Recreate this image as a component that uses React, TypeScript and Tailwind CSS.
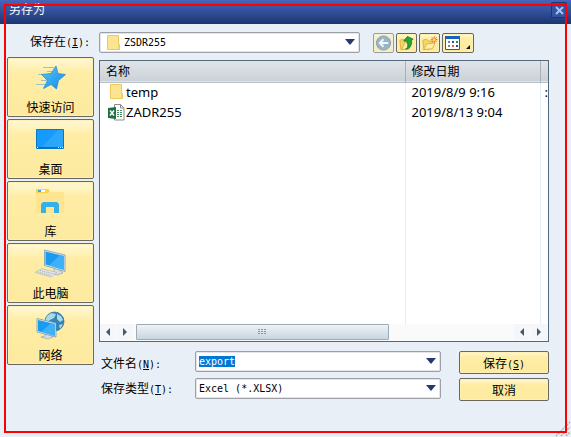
import { useEffect, useRef, type ReactNode } from "react";

function Latin({ children }: { children: ReactNode }) {
  return <span className="font-['DejaVu_Sans_Mono',monospace] text-[10px] leading-none">{children}</span>;
}

function FolderIcon() {
  return (
    <svg width="14" height="17" viewBox="0 0 14 17" aria-hidden="true" className="shrink-0">
      <path d="M.5 1.500h11v9h1v5H.5z" fill="#ffe48f" stroke="#ecc95c" />
      <path d="M11.500 11v4" stroke="#f7d774" />
    </svg>
  );
}

function ExcelIcon() {
  return (
    <svg width="17" height="17" viewBox="0 0 17 17" aria-hidden="true" className="shrink-0">
      <path d="M6.500 .5h6l3.500 3.500v12H6.500z" fill="#fff" stroke="#8b8b8b" />
      <path d="M12.500 .5v3.500H16" fill="none" stroke="#8b8b8b" />
      <path d="M9 6.500h2M12 6.500h2M9 8.500h2M12 8.500h2M9 10.500h2M12 10.500h2M9 12.500h2M12 12.500h2" stroke="#3f8f63" />
      <path d="M0 4l8-1v12l-8-1z" fill="#1e7145" />
      <path d="M2 6.500l4 5M6 6.500l-4 5" stroke="#fff" strokeWidth="1.500" />
    </svg>
  );
}

function Chevron() {
  return (
    <svg width="10" height="6" viewBox="0 0 10 6" aria-hidden="true" className="pointer-events-none absolute top-[7px] right-[5px]">
      <path d="M0 0h10L5 6z" fill="#24396c" />
    </svg>
  );
}

const places = [
  {
    name: "快速访问",
    icon: (
      <>
        <defs>
          <linearGradient id="star" x2="1" y2="1">
            <stop stopColor="#58c8fa" />
            <stop offset="1" stopColor="#1588e5" />
          </linearGradient>
        </defs>
        <path d="M9 5.500h11M13 9.500h7M4 12.500h5M7 18.500h6M2 22.500h9" stroke="#9fc4bd" />
        <path d="M22 4L24 11.500 31.500 12.500 24.500 18.500 22.500 27 17 22.500 9.500 26.500 13.500 18.500 7.500 12.500 17 11.500z" fill="url(#star)" stroke="#2a90d8" strokeWidth=".8" />
      </>
    ),
  },
  {
    name: "桌面",
    icon: (
      <>
        <path d="M2.500 5.500h27v19h-27z" fill="#149bfb" stroke="#0878c4" />
        <path d="M8 23L24 6h5v17z" fill="#38adfc" opacity=".6" />
        <path d="M3 23.500h26" stroke="#0a6fb8" />
        <path d="M3 23.500h1M24 23.500h1M26 23.500h1M28 23.500h1" stroke="#fff" />
      </>
    ),
  },
  {
    name: "库",
    icon: (
      <>
        <path d="M2 6h28v21H2z" fill="#ffe491" />
        <path d="M2 3h12l2 2-2 2H2z" fill="#fbd04f" />
        <path d="M4 5h3" stroke="#36a9e8" strokeWidth="2" />
        <path d="M7 5h4" stroke="#fff" strokeWidth="2" />
        <path d="M7 27V18l2-2h14l2 2v9h-5v-6h-8v6z" fill="#36b0e9" />
      </>
    ),
  },
  {
    name: "此电脑",
    icon: (
      <>
        <path d="M20 21v3l-4 1 7 2 6-2-4-3" fill="#d8dde1" stroke="#9aa5ad" strokeWidth=".7" />
        <path d="M10.500 2L31 7v16.500L10.500 17.500z" fill="#dbe8f0" stroke="#6b91aa" strokeWidth=".7" />
        <path d="M11.500 3.500L30 8v14L11.500 16.500z" fill="#199bf0" />
        <path d="M15 17.500L26 7l4 1v14z" fill="#5ac0fb" opacity=".6" />
        <path d="M1 24.500L7.500 20.500 23 24.500 17.500 29z" fill="#e0e3e6" stroke="#b4bac0" strokeWidth=".7" />
        <path d="M4 24l13 3.500M6 22.500l14 3.500" stroke="#a9b0b8" strokeDasharray="1 1" />
      </>
    ),
  },
  {
    name: "网络",
    icon: (
      <>
        <circle cx="20.500" cy="11.500" r="9.500" fill="#3585b5" stroke="#2b6793" strokeWidth=".7" />
        <path d="M13 6l4-3 5 1-2 4-4 2-2 2-3-1zM23 4l4 2 2 4-3 2-3-3zM25 15l4-1-3 5z" fill="#a9dae9" />
        <path d="M11 24v2l-4 1 7 2 5-2-4-3" fill="#d8dde1" stroke="#9aa5ad" strokeWidth=".7" />
        <path d="M3 8.500L22 13v14L3 22z" fill="#dbe8f0" stroke="#6b91aa" strokeWidth=".7" />
        <path d="M4 10l17 4v12L4 21z" fill="#199bf0" />
        <path d="M7 22L17 13l4 1v12z" fill="#5ac0fb" opacity=".6" />
      </>
    ),
  },
];

const gold = "border border-[#69685f] rounded-[2px] bg-linear-to-b from-[#fff8d8] via-[#ffeda5] via-25% to-[#fdeaa0] shadow-[inset_0_0_0_1px_#fff1b4]";
const field = "block w-full appearance-none rounded-[2px] border border-[#9da1a7] bg-white shadow-[inset_0_0_0_1px_#e3e5e8] outline-none";

function ToolButton({ label, wide, faded, children }: { label: string; wide?: boolean; faded?: boolean; children: ReactNode }) {
  return (
    <button aria-label={label} className={`${gold} flex h-5 items-center justify-center ${wide ? "w-8" : "w-[21px]"} ${faded ? "opacity-60" : ""}`}>
      <svg width={wide ? 28 : 17} height="18" viewBox={wide ? "0 0 28 18" : "0 0 18 18"} aria-hidden="true" className="shrink-0">
        {children}
      </svg>
    </button>
  );
}

function ScrollArrow({ label, left }: { label: string; left?: boolean }) {
  return (
    <button aria-label={label} className="flex h-4 w-4 items-center justify-center bg-[#f4f6fa]">
      <svg width="4" height="8" viewBox="0 0 4 8" aria-hidden="true">
        <path d={left ? "M4 0v8L0 4z" : "M0 0v8l4-4z"} fill="#465866" />
      </svg>
    </button>
  );
}

export default function App() {
  const nameRef = useRef<HTMLInputElement>(null);
  useEffect(() => {
    nameRef.current?.focus();
    nameRef.current?.select();
  }, []);

  return (
    <div className="relative min-h-screen overflow-hidden bg-[#e8eff7] font-['Noto_Sans_CJK_SC',sans-serif] text-xs text-black">
      <header className="flex h-6 items-start justify-between bg-linear-to-b from-[#4566bb] via-[#315099] to-[#1c3471] pr-1 pl-[9px] text-white">
        <h1 className="leading-[18px]">另存为</h1>
        <button aria-label="关闭" className="mt-[2px] flex h-4 w-4 items-center justify-center rounded-[2px] border border-[#1c3474] bg-[#3453a2]">
          <svg width="9" height="9" viewBox="0 0 9 9" aria-hidden="true">
            <path d="M1 1l7 7M8 1L1 8" stroke="#a4c4f6" strokeWidth="2" />
          </svg>
        </button>
      </header>

      <main className="grid grid-cols-[87px_1fr] gap-x-[5px] pt-2 pr-[22px] pb-6 pl-[7px]">
        <label htmlFor="location" className="pr-1 text-right leading-[18px]">
          保存在<Latin>(<u>I</u>):</Latin>
        </label>
        <div className="flex h-[25px] items-start pr-[75px]">
          <div className="relative mr-[13px] flex-1">
            <select id="location" className={`${field} h-[21px] pl-6 font-['DejaVu_Sans_Mono',monospace] text-[10px]`}>
              <option>ZSDR255</option>
            </select>
            <span className="pointer-events-none absolute top-[2px] left-2"><FolderIcon /></span>
            <Chevron />
          </div>
          <div className="mt-px flex gap-[2px]">
            <ToolButton label="返回" faded>
              <circle cx="9" cy="9" r="7.500" fill="#628fa9" stroke="#466e84" />
              <path d="M14 9H6M9 5L5 9 9 13" fill="none" stroke="#fff" strokeWidth="2" />
            </ToolButton>
            <ToolButton label="向上一级">
              <path d="M2 6l4-1 2 1 6 1-2 8-9 1z" fill="#f5d568" stroke="#d3aa37" strokeWidth=".8" />
              <path d="M4 16l3-7 8-1-3 7z" fill="#ffeea4" stroke="#d3aa37" strokeWidth=".8" />
              <path d="M8 15.500c3-1 3-5 1-8.500H6l4-5 6 3-2 1.500c1 5-2 9-6 9z" fill="#25a43a" stroke="#166e28" strokeWidth=".8" />
            </ToolButton>
            <ToolButton label="新建文件夹">
              <path d="M2 6l4-1 2 2h4v8l-9 1z" fill="#f5d568" stroke="#d3aa37" strokeWidth=".8" />
              <path d="M3 16l3-6 9-1-3 6z" fill="#ffeea4" stroke="#d3aa37" strokeWidth=".8" />
              <path d="M14 2v7M10.500 5.500h7M11.500 3l5 5M16.500 3l-5 5" stroke="#ea522e" />
              <circle cx="14" cy="5.500" r="1.500" fill="#ffd76d" />
            </ToolButton>
            <ToolButton label="视图" wide>
              <path d="M1.500 3.500h14v12h-14z" fill="#fff" stroke="#1760c4" />
              <path d="M1 3.500h15" stroke="#1760c4" strokeWidth="3" />
              <path d="M4 8h2M4 12h2" stroke="#7388a8" strokeWidth="2" />
              <path d="M8 8h2" stroke="#33538e" strokeWidth="2" />
              <path d="M12 8h2" stroke="#328d4e" strokeWidth="2" />
              <path d="M8 12h2" stroke="#e36c35" strokeWidth="2" />
              <path d="M12 12h2" stroke="#244b9b" strokeWidth="2" />
              <path d="M26 11v4h-4z" fill="#111" />
            </ToolButton>
          </div>
        </div>

        <nav className="flex flex-col gap-[2px]">
          {places.map((place) => (
            <button key={place.name} className={`${gold} flex h-[60px] flex-col items-center pt-1`}>
              <svg width="33" height="32" viewBox="0 0 33 32" aria-hidden="true" className="shrink-0">{place.icon}</svg>
              <span className="mt-1 leading-[18px]">{place.name}</span>
            </button>
          ))}
        </nav>

        <div className="min-w-0 pt-[3px]">
          <section aria-label="文件" className="flex h-[282px] flex-col border border-[#536879] bg-white">
            <table className="w-full flex-1 table-fixed border-collapse text-left">
              <colgroup>
                <col />
                <col className="w-[135px]" />
                <col className="w-2" />
              </colgroup>
              <thead>
                <tr className="h-[21px] border-b border-[#b9bfc6] bg-linear-to-b from-[#e1e5ea] to-[#cbd1d8]">
                  <th className="border-r border-[#a8b0ba] px-1.5 py-0 leading-5 font-normal">名称</th>
                  <th className="border-r border-[#a8b0ba] px-1.5 py-0 leading-5 font-normal">修改日期</th>
                  <td />
                </tr>
              </thead>
              <tbody className="font-['Noto_Sans',sans-serif] text-[13px] leading-[18px]">
                <tr className="h-[21px]">
                  <td className="border-r border-[#e5edf7] p-0 pl-[10px] align-top">
                    <span className="flex items-center gap-0.5"><FolderIcon />temp</span>
                  </td>
                  <td className="border-r border-[#e5edf7] px-1.5 py-0 align-top">2019/8/9 9:16</td>
                  <td className="py-0 pl-1 align-top">:</td>
                </tr>
                <tr className="h-[21px]">
                  <td className="border-r border-[#e5edf7] p-0 pl-2 align-top">
                    <span className="flex items-center gap-px"><ExcelIcon />ZADR255</span>
                  </td>
                  <td className="border-r border-[#e5edf7] px-1.5 py-0 align-top">2019/8/13 9:04</td>
                  <td />
                </tr>
                <tr className="h-[200px]">
                  <td className="border-r border-[#e5edf7]" />
                  <td className="border-r border-[#e5edf7]" />
                  <td />
                </tr>
              </tbody>
            </table>
            <div className="flex h-[17px] shrink-0 gap-px bg-[#fafafb] pr-px">
              <ScrollArrow label="向左滚动" left />
              <ScrollArrow label="向右滚动" />
              <div className="ml-0.5 flex-1">
                <div className="flex h-4 w-[67%] items-center justify-center rounded-[1px] border border-[#9caab5] bg-linear-to-b from-[#eef3f7] to-[#c8d5df]">
                  <svg width="8" height="6" viewBox="0 0 8 6" aria-hidden="true">
                    <path d="M0 .5h8M0 2.500h8M0 4.500h8" stroke="#8597a5" strokeDasharray="2 1" />
                  </svg>
                </div>
              </div>
              <ScrollArrow label="向左翻页" left />
              <ScrollArrow label="向右翻页" />
            </div>
          </section>

          <form onSubmit={(event) => event.preventDefault()} className="mt-[9px] grid auto-rows-[23px] grid-cols-[96px_1fr_90px] gap-y-1">
            <label htmlFor="filename" className="pl-0.5 leading-[23px]">文件名<Latin>(<u>N</u>):</Latin></label>
            <div className="relative mr-[18px]">
              <input
                id="filename"
                ref={nameRef}
                defaultValue="export"
                className={`${field} h-[21px] px-[3px] font-['DejaVu_Sans_Mono',monospace] text-[10px] selection:bg-[#0078d7] selection:text-white`}
              />
              <Chevron />
            </div>
            <button className={`${gold} leading-5`}>保存<Latin>(<u>S</u>)</Latin></button>

            <label htmlFor="filetype" className="pl-0.5 leading-[20px]">保存类型<Latin>(<u>T</u>):</Latin></label>
            <div className="relative mr-[18px]">
              <select id="filetype" className={`${field} h-[21px] px-[3px] font-['DejaVu_Sans_Mono',monospace] text-[10px]`}>
                <option>Excel (*.XLSX)</option>
              </select>
              <Chevron />
            </div>
            <button type="button" className={`${gold} leading-5`}>取消</button>
          </form>
        </div>
      </main>

      <svg width="16" height="16" viewBox="0 0 16 16" aria-hidden="true" className="absolute right-0 bottom-0">
        <path d="M1 15L15 1M6 15l9-9M11 15l4-4" stroke="#a8b3be" strokeWidth="1.500" strokeDasharray="2 1" />
      </svg>
      <div className="pointer-events-none absolute inset-1 border-2 border-[#ff0000]" />
    </div>
  );
}
